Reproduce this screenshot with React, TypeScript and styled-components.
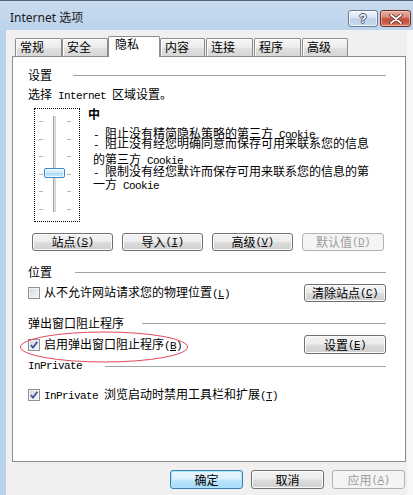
import React from 'react';
import styled, { createGlobalStyle, css } from 'styled-components';

const CJK = `"Noto Sans CJK SC", "Noto Sans", sans-serif`;
const MONO = `"Liberation Mono", "DejaVu Sans Mono", monospace`;
const UI = `"Noto Sans", "Noto Sans CJK SC", sans-serif`;

const GlobalStyle = createGlobalStyle`
  html, body { margin: 0; padding: 0; background: #b9d1ea; }
  body { font-family: ${CJK}; font-size: 12px; color: #000; }
  * { box-sizing: border-box; }
`;

const Window = styled.div`
  position: relative;
  width: 413px;
  height: 495px;
  overflow: hidden;
  background: #b9d1ea;
  border-top: 1px solid #56667a;
  display: flex;
  flex-direction: column;
`;

const TitleBar = styled.div`
  height: 29px;
  flex: none;
  display: flex;
  align-items: flex-start;
  padding-left: 10px;
  background: linear-gradient(#c9dbef, #bcd3ec);
`;

const Title = styled.div`
  margin-top: 9px;
  font-family: ${UI};
  font-size: 12px;
  line-height: 16px;
  color: #1a1a1a;
`;

const Caption = styled.div`
  margin-left: auto;
  margin-top: 9px;
  margin-right: 2px;
  display: flex;
  gap: 2px;
`;

const HelpBtn = styled.div`
  width: 30px;
  height: 17px;
  border: 1px solid #6d7d92;
  border-radius: 3px;
  background: linear-gradient(#f0f5fb, #d9e5f2 45%, #bcd0e7 52%, #cadcf0);
  box-shadow: inset 0 0 0 1px rgba(255, 255, 255, 0.6);
  display: flex;
  align-items: center;
  justify-content: center;
  font-family: "Liberation Sans", sans-serif;
  font-weight: 700;
  font-size: 12px;
  line-height: 12px;
  color: #f6f9fc;
  text-shadow: 1px 0 0 #4a5a70, -1px 0 0 #4a5a70, 0 1px 0 #4a5a70, 0 -1px 0 #4a5a70;
`;

const CloseBtn = styled.div`
  width: 31px;
  height: 17px;
  border: 1px solid #6b2d2a;
  border-radius: 3px;
  background: linear-gradient(#eab0a2, #d98a78 40%, #c4503f 52%, #c85a45 80%, #dc8c70);
  box-shadow: inset 0 0 0 1px rgba(255, 220, 210, 0.5);
  display: flex;
  align-items: center;
  justify-content: center;
`;

const Body = styled.div`
  flex: 1;
  display: flex;
`;

const LeftFrame = styled.div`
  width: 6px;
  background: #b9d1ea;
`;

const Client = styled.div`
  width: 401px;
  background: #f0f0f0;
  padding-top: 6px;
  display: flex;
  flex-direction: column;
`;

const RightFrame = styled.div`
  flex: 1;
  background: #f7f7f7;
`;

const TabStrip = styled.div`
  height: 21px;
  padding-left: 9px;
  display: flex;
  align-items: flex-end;
`;

const Tab = styled.div<{ $active?: boolean; $w: number; $ml?: number }>`
  width: ${p => p.$w}px;
  margin-left: ${p => p.$ml ?? 0}px;
  height: ${p => (p.$active ? 21 : 19)}px;
  padding: ${p => (p.$active ? '1px 0 0 6px' : '2px 0 0 4px')};
  border: 1px solid #898c95;
  border-bottom: none;
  border-radius: 2px 2px 0 0;
  font-size: 12px;
  line-height: 12px;
  white-space: nowrap;
  ${p =>
    p.$active
      ? css`
          position: relative;
          z-index: 1;
          background: #fff;
        `
      : css`
          background: linear-gradient(#f6f6f6, #ededed 45%, #dedede 55%, #d6d6d6);
          box-shadow: inset 1px 1px 0 #fcfcfc;
        `}
`;

const Panel = styled.div`
  margin: -1px 0 0 6px;
  width: 394px;
  height: 406px;
  border: 1px solid #898c95;
  background: #fff;
  padding: 0 19px 0 15px;
  display: flex;
  flex-direction: column;
`;

const GroupHeader = styled.div<{ $mt: number; $gap: number }>`
  display: flex;
  align-items: center;
  height: 12px;
  margin-top: ${p => p.$mt}px;
  line-height: 12px;
  white-space: nowrap;
  &::after {
    content: '';
    flex: 1;
    height: 1px;
    background: #a3a3a3;
    margin-left: ${p => p.$gap}px;
  }
`;

const Ascii = styled.span`
  font-family: ${MONO};
  font-size: 11px;
  letter-spacing: -0.6px;
`;

const Mn = styled.span`
  font-family: ${MONO};
  font-size: 11px;
  letter-spacing: -0.6px;
  u {
    text-underline-offset: 1px;
  }
`;

const TextLine = styled.div<{ $mt: number }>`
  margin-top: ${p => p.$mt}px;
  height: 12px;
  line-height: 12px;
  white-space: nowrap;
`;

const SettingsBody = styled.div`
  margin-top: 8px;
  height: 114px;
  display: flex;
`;

const SliderBox = styled.div`
  position: relative;
  margin-left: 6px;
  width: 46px;
  height: 114px;
  border: 1px dotted #000;
  padding-left: 4px;
  display: flex;
  align-items: flex-start;
`;

const TickCol = styled.div<{ $ml: number }>`
  margin: 12px 0 0 ${p => p.$ml}px;
  width: 4px;
  height: 89px;
  display: flex;
  flex-direction: column;
  justify-content: space-between;
`;

const Tick = styled.span`
  display: block;
  height: 1px;
  background: #b6b6b6;
`;

const Track = styled.div`
  margin: 7px 0 0 10px;
  width: 3px;
  height: 96px;
  background: linear-gradient(to right, #a4a4a4 1px, #e2e2e2 1px, #d0d0d0);
`;

const Thumb = styled.div`
  position: absolute;
  left: 9px;
  top: 59px;
  width: 21px;
  height: 10px;
  border: 1px solid #3a86c8;
  border-radius: 2px;
  background: linear-gradient(#eaf7fe, #c3e8fb 50%, #a9dcf7 55%, #cdeefd);
  box-shadow: inset 0 0 0 1px rgba(255, 255, 255, 0.7);
`;

const Desc = styled.div`
  margin-left: 8px;
  display: flex;
  flex-direction: column;
`;

const Level = styled.div`
  font-weight: 700;
  height: 12px;
  line-height: 12px;
`;

const DescLine = styled.div<{ $h: number; $mt?: number }>`
  margin-left: 5px;
  margin-top: ${p => p.$mt ?? 0}px;
  height: ${p => p.$h}px;
  line-height: 12px;
  white-space: nowrap;
`;

const ButtonRow = styled.div<{ $mt: number }>`
  margin-top: ${p => p.$mt}px;
  padding-left: 4px;
  display: flex;
  gap: 9px;
`;

const Button = styled.div<{ $w: number; $h: number; $disabled?: boolean; $default?: boolean }>`
  width: ${p => p.$w}px;
  height: ${p => p.$h}px;
  flex: none;
  border: 1px solid #707070;
  border-radius: 3px;
  background: linear-gradient(#f3f3f3, #ececec 48%, #dddddd 52%, #cfcfcf);
  box-shadow: inset 0 0 0 1px #fbfbfb;
  display: flex;
  align-items: center;
  justify-content: center;
  font-size: 12px;
  line-height: 12px;
  color: #000;
  white-space: nowrap;
  ${p =>
    p.$disabled &&
    css`
      border-color: #adb2b5;
      background: #f4f4f4;
      box-shadow: none;
      color: #9c9c9c;
    `}
  ${p =>
    p.$default &&
    css`
      border-color: #3c7fb1;
      background: linear-gradient(#eaf6fd, #d9f0fc 48%, #bee6fd 52%, #a7d9f5);
      box-shadow: inset 0 0 0 1px #a8e6ff;
    `}
`;

const OptionRow = styled.div<{ $mt: number; $h: number }>`
  margin-top: ${p => p.$mt}px;
  height: ${p => p.$h}px;
  display: flex;
  align-items: center;
  justify-content: space-between;
`;

const CheckLabel = styled.div`
  display: flex;
  align-items: center;
  gap: 4px;
  line-height: 12px;
  white-space: nowrap;
`;

const Box = styled.span`
  width: 12px;
  height: 12px;
  flex: none;
  border: 1px solid #8e8f8f;
  background: linear-gradient(135deg, #d4d6da, #f7f7f7);
  box-shadow: inset 0 0 0 1px #f4f4f4;
  display: flex;
  align-items: center;
  justify-content: center;
`;

const Footer = styled.div`
  margin: 8px 0 0 6px;
  width: 394px;
  padding-right: 1px;
  display: flex;
  justify-content: flex-end;
  gap: 8px;
`;

const Annotation = styled.svg`
  position: absolute;
  left: 20px;
  top: 330px;
  overflow: visible;
  pointer-events: none;
`;

const Check = ({ on }: { on?: boolean }) => (
  <Box>
    {on && (
      <svg width="10" height="10" viewBox="0 0 10 10">
        <polyline points="1.8,5 4,7.6 8.4,1.8" fill="none" stroke="#3b4f98" strokeWidth="1.7" />
      </svg>
    )}
  </Box>
);

const M = ({ k }: { k: string }) => (
  <Mn>
    (<u>{k}</u>)
  </Mn>
);

const tabs = [
  { label: '常规', w: 47 },
  { label: '安全', w: 46 },
  { label: '隐私', w: 52, active: true },
  { label: '内容', w: 45 },
  { label: '连接', w: 47, ml: 1 },
  { label: '程序', w: 47, ml: 1 },
  { label: '高级', w: 46, ml: 1 },
];

export default function App() {
  return (
    <>
      <GlobalStyle />
      <Window>
        <TitleBar>
          <Title>Internet 选项</Title>
          <Caption>
            <HelpBtn>?</HelpBtn>
            <CloseBtn>
              <svg width="14" height="10" viewBox="0 0 14 10">
                <path d="M2 1 L12 9 M12 1 L2 9" stroke="#5a2420" strokeWidth="3.4" strokeLinecap="round" />
                <path d="M2 1 L12 9 M12 1 L2 9" stroke="#ffffff" strokeWidth="1.8" strokeLinecap="round" />
              </svg>
            </CloseBtn>
          </Caption>
        </TitleBar>
        <Body>
          <LeftFrame />
          <Client>
            <TabStrip>
              {tabs.map(t => (
                <Tab key={t.label} $w={t.w} $ml={t.ml} $active={t.active}>
                  {t.label}
                </Tab>
              ))}
            </TabStrip>
            <Panel>
              <GroupHeader $mt={12} $gap={21}>设置</GroupHeader>
              <TextLine $mt={7}>
                选择<Ascii> Internet </Ascii>区域设置。
              </TextLine>
              <SettingsBody>
                <SliderBox>
                  <TickCol $ml={0}>
                    {[0, 1, 2, 3, 4, 5].map(i => (
                      <Tick key={i} />
                    ))}
                  </TickCol>
                  <Track />
                  <TickCol $ml={11}>
                    {[0, 1, 2, 3, 4, 5].map(i => (
                      <Tick key={i} />
                    ))}
                  </TickCol>
                  <Thumb />
                </SliderBox>
                <Desc>
                  <Level>中</Level>
                  <DescLine $mt={7} $h={10}>
                    <Ascii>- </Ascii>阻止没有精简隐私策略的第三方<Ascii> Cookie</Ascii>
                  </DescLine>
                  <DescLine $h={16}>
                    <Ascii>- </Ascii>阻止没有经您明确同意而保存可用来联系您的信息
                  </DescLine>
                  <DescLine $h={12}>
                    的第三方<Ascii> Cookie</Ascii>
                  </DescLine>
                  <DescLine $h={13}>
                    <Ascii>- </Ascii>限制没有经您默许而保存可用来联系您的信息的第
                  </DescLine>
                  <DescLine $h={12}>
                    一方<Ascii> Cookie</Ascii>
                  </DescLine>
                </Desc>
              </SettingsBody>
              <ButtonRow $mt={11}>
                <Button $w={81} $h={18}>
                  站点<M k="S" />
                </Button>
                <Button $w={81} $h={18}>
                  导入<M k="I" />
                </Button>
                <Button $w={81} $h={18}>
                  高级<M k="V" />
                </Button>
                <Button $w={82} $h={18} $disabled>
                  默认值<M k="D" />
                </Button>
              </ButtonRow>

              <GroupHeader $mt={15} $gap={23}>位置</GroupHeader>
              <OptionRow $mt={6} $h={18}>
                <CheckLabel>
                  <Check />
                  <span>
                    从不允许网站请求您的物理位置<M k="L" />
                  </span>
                </CheckLabel>
                <Button $w={82} $h={18}>
                  清除站点<M k="C" />
                </Button>
              </OptionRow>

              <GroupHeader $mt={15} $gap={18}>弹出窗口阻止程序</GroupHeader>
              <OptionRow $mt={6} $h={19}>
                <CheckLabel>
                  <Check on />
                  <span>
                    启用弹出窗口阻止程序<M k="B" />
                  </span>
                </CheckLabel>
                <Button $w={82} $h={19}>
                  设置<M k="E" />
                </Button>
              </OptionRow>

              <GroupHeader $mt={6} $gap={23}>
                <Ascii>InPrivate</Ascii>
              </GroupHeader>
              <OptionRow $mt={16} $h={13}>
                <CheckLabel>
                  <Check on />
                  <span>
                    <Ascii>InPrivate </Ascii>浏览启动时禁用工具栏和扩展<M k="T" />
                  </span>
                </CheckLabel>
              </OptionRow>
            </Panel>
            <Footer>
              <Button $w={73} $h={19} $default>
                确定
              </Button>
              <Button $w={73} $h={19}>
                取消
              </Button>
              <Button $w={73} $h={19} $disabled>
                应用<M k="A" />
              </Button>
            </Footer>
          </Client>
          <RightFrame />
        </Body>
        <Annotation width="169" height="32" viewBox="0 0 169 32">
          <ellipse cx="84" cy="16" rx="83.5" ry="15" fill="none" stroke="#e4485a" strokeWidth="1" />
        </Annotation>
      </Window>
    </>
  );
}
